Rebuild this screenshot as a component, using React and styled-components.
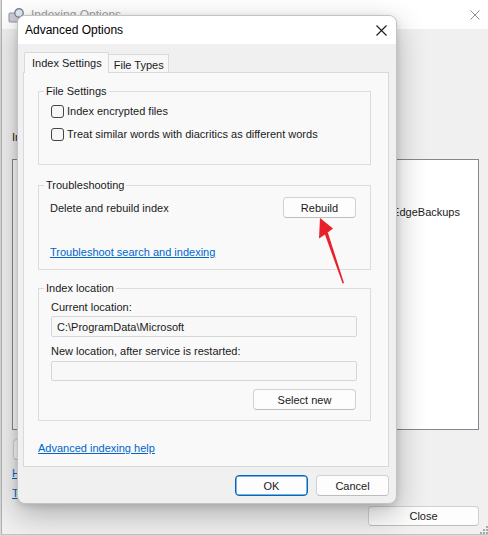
import React from "react";
import styled, { createGlobalStyle, css } from "styled-components";

const FONT = `"Liberation Sans", Arial, sans-serif`;

const GlobalStyle = createGlobalStyle`
  html, body {
    margin: 0;
    padding: 0;
  }
  body {
    font-family: ${FONT};
    background: #d9d9d9;
  }
  * {
    box-sizing: border-box;
  }
`;

const Screen = styled.div`
  position: relative;
  width: 488px;
  height: 536px;
  overflow: hidden;
  background: #d9d9d9;
  font-family: ${FONT};
  font-size: 11px;
  line-height: 14px;
  color: #1a1a1a;
`;

/* ---------- background window (Indexing Options) ---------- */

const MainWindow = styled.div`
  position: relative;
  display: flex;
  flex-direction: column;
  height: 535px;
  margin-left: 1px;
  border-left: 1px solid #b2b2b2;
  border-bottom: 1px solid #c4c4c4;
  background: #f0f0f0;
`;

const MainTitle = styled.div`
  display: flex;
  align-items: center;
  gap: 5px;
  height: 29px;
  padding: 0 8px 0 6px;
  background: #ffffff;
  color: #a0a0a0;
  font-size: 12px;
`;

const TitleText = styled.span`
  flex: 1;
`;

const MainBody = styled.div`
  display: flex;
  flex-direction: column;
  padding: 0 9px 0 10px;
`;

const StatusArea = styled.div`
  height: 101px;
`;

const Label = styled.div`
  white-space: nowrap;
`;

const LocationList = styled.div`
  margin-top: 15px;
  height: 271px;
  border: 1px solid #828790;
  background: #ffffff;
  overflow: hidden;
`;

const ListHeader = styled.div`
  display: flex;
  height: 26px;
  align-items: center;
  padding-left: 6px;
`;

const ListRow = styled.div`
  display: flex;
  height: 17px;
  align-items: center;
  padding-left: 6px;
  white-space: nowrap;
`;

const Cell = styled.span`
  width: ${(p) => p.$width || "auto"};
  flex: ${(p) => (p.$grow ? 1 : "none")};
  text-align: ${(p) => (p.$right ? "right" : "left")};
  padding-right: ${(p) => (p.$right ? "18px" : "0")};
  overflow: hidden;
`;

const BackButtons = styled.div`
  display: flex;
  gap: 8px;
  margin-top: 9px;
  padding-left: 1px;
`;

const BackLink = styled.a`
  display: block;
  margin-top: 6px;
  color: #0066cc;
  text-decoration: underline;
  white-space: nowrap;
`;

const BackFooter = styled.div`
  display: flex;
  justify-content: flex-end;
  margin-top: 6px;
`;

const Grip = styled.svg`
  position: absolute;
  right: 0;
  bottom: 0;
`;

/* ---------- shared controls ---------- */

const Button = styled.button`
  width: ${(p) => p.$width}px;
  height: ${(p) => p.$height || 21}px;
  padding: 0;
  border: 1px solid #d1d1d1;
  border-bottom-color: #bdbdbd;
  border-radius: 4px;
  background: #fdfdfd;
  font-family: ${FONT};
  font-size: 11px;
  color: #1a1a1a;
  ${(p) =>
    p.$primary &&
    css`
      border: 1px solid #0067c0;
      box-shadow: inset 0 0 0 0.5px #0067c0;
    `}
`;

const Link = styled.a`
  color: #0066cc;
  text-decoration: underline;
  cursor: pointer;
  align-self: flex-start;
  margin-top: ${(p) => p.$gap || 0}px;
`;

/* ---------- dialog ---------- */

const Dialog = styled.div`
  position: absolute;
  left: 17px;
  top: 15px;
  width: 380px;
  height: 489px;
  display: flex;
  flex-direction: column;
  border: 1px solid #c3c3c3;
  border-radius: 8px;
  background: #f0f0f0;
  box-shadow: 0 10px 30px rgba(0, 0, 0, 0.28), 0 2px 6px rgba(0, 0, 0, 0.12);
  overflow: hidden;
`;

const DialogTitle = styled.div`
  display: flex;
  align-items: center;
  justify-content: space-between;
  height: 29px;
  padding: 0 9px 0 7px;
  background: #ffffff;
  font-size: 12px;
  color: #000000;
`;

const DialogBody = styled.div`
  flex: 1;
  display: flex;
  flex-direction: column;
  padding: 8px 7px 7px 5px;
`;

const TabStrip = styled.div`
  position: relative;
  z-index: 1;
  display: flex;
  align-items: flex-end;
  height: 21px;
  margin-bottom: -1px;
  padding-left: 1px;
`;

const Tab = styled.div`
  display: flex;
  align-items: center;
  white-space: nowrap;
  border: 1px solid #d9d9d9;
  border-bottom: none;
  ${(p) =>
    p.$active
      ? css`
          height: 21px;
          padding: 0 6px 0 7px;
          background: #f9f9f9;
          border-radius: 2px 2px 0 0;
        `
      : css`
          height: 18px;
          margin-bottom: 1px;
          padding: 2px 4px 0 5px;
          border-left: none;
          background: #f7f7f7;
        `}
`;

const TabPanel = styled.div`
  flex: 1;
  display: flex;
  flex-direction: column;
  border: 1px solid #d9d9d9;
  background: #f9f9f9;
  padding: 11px 17px 11px 14px;
`;

const GroupBox = styled.fieldset`
  margin: ${(p) => p.$gap || 0}px 0 0 0;
  padding: 0;
  min-width: 0;
  border: 1px solid #dcdcdc;
`;

const Legend = styled.legend`
  margin-left: 5px;
  padding: 0 2px;
  line-height: 14px;
`;

const GroupInner = styled.div`
  display: flex;
  flex-direction: column;
  padding: ${(p) => p.$pad};
`;

const CheckRow = styled.label`
  display: flex;
  align-items: center;
  gap: 3px;
  height: 20px;
  & + & {
    margin-top: 3px;
  }
`;

const CheckBox = styled.span`
  width: 13px;
  height: 13px;
  border: 1px solid #454545;
  border-radius: 3px;
  background: #f7f7f7;
`;

const ActionRow = styled.div`
  display: flex;
  align-items: center;
  justify-content: space-between;
  padding-right: 1px;
`;

const FieldLabel = styled.div`
  margin-top: ${(p) => p.$gap || 0}px;
`;

const TextField = styled.div`
  margin-top: ${(p) => p.$gap || 0}px;
  height: ${(p) => p.$height || 21}px;
  display: flex;
  align-items: center;
  padding-left: 5px;
  border: 1px solid #d6d6d6;
  border-radius: 2px;
  background: #f8f8f8;
`;

const RightRow = styled.div`
  display: flex;
  justify-content: flex-end;
  margin-top: ${(p) => p.$gap || 0}px;
  padding-right: 1px;
`;

const DialogButtons = styled.div`
  display: flex;
  justify-content: flex-end;
  gap: 8px;
  margin-top: 8px;
`;

const Arrow = styled.svg`
  position: absolute;
  left: 310px;
  top: 210px;
  pointer-events: none;
`;

function CloseIcon({ size, color, width }) {
  return (
    <svg width={size} height={size} viewBox={`0 0 ${size} ${size}`}>
      <path
        d={`M0.5 0.5 L${size - 0.5} ${size - 0.5} M${size - 0.5} 0.5 L0.5 ${size - 0.5}`}
        stroke={color}
        strokeWidth={width}
        fill="none"
      />
    </svg>
  );
}

function IndexIcon() {
  return (
    <svg width="18" height="16" viewBox="0 0 18 16">
      <rect x="1" y="6" width="11" height="9" rx="1" fill="#c9cdd3" stroke="#8c939c" />
      <circle cx="11" cy="6" r="4.2" fill="#dfe8f2" stroke="#7a8594" strokeWidth="1.4" />
      <path d="M14 9 L17 12" stroke="#7a8594" strokeWidth="2" strokeLinecap="round" />
    </svg>
  );
}

function GripIcon() {
  const dots = [
    [6, 0],
    [3, 3],
    [6, 3],
    [0, 6],
    [3, 6],
    [6, 6],
  ];
  return (
    <Grip width="8" height="8" viewBox="0 0 8 8">
      {dots.map(([x, y]) => (
        <rect key={`${x}-${y}`} x={x} y={y} width="2" height="2" fill="#a8a8a8" />
      ))}
    </Grip>
  );
}

export default function App() {
  return (
    <>
      <GlobalStyle />
      <Screen>
        <MainWindow>
          <MainTitle>
            <IndexIcon />
            <TitleText>Indexing Options</TitleText>
            <CloseIcon size={10} color="#8f8f8f" width={1} />
          </MainTitle>
          <MainBody>
            <StatusArea />
            <Label>Index these locations:</Label>
            <LocationList>
              <ListHeader />
              <ListRow />
              <ListRow>
                <Cell $grow $right>
                  EdgeBackups
                </Cell>
              </ListRow>
            </LocationList>
            <BackButtons>
              <Button $width={72} aria-label="Modify" />
            </BackButtons>
            <BackLink>How does indexing affect searches?</BackLink>
            <BackLink>Troubleshoot search and indexing</BackLink>
            <BackFooter>
              <Button $width={111} $height={20}>
                Close
              </Button>
            </BackFooter>
          </MainBody>
          <GripIcon />
        </MainWindow>

        <Dialog>
          <DialogTitle>
            <span>Advanced Options</span>
            <CloseIcon size={11} color="#1a1a1a" width={1.1} />
          </DialogTitle>
          <DialogBody>
            <TabStrip>
              <Tab $active>Index Settings</Tab>
              <Tab>File Types</Tab>
            </TabStrip>
            <TabPanel>
              <GroupBox>
                <Legend>File Settings</Legend>
                <GroupInner $pad="3px 12px 20px 12px">
                  <CheckRow>
                    <CheckBox />
                    Index encrypted files
                  </CheckRow>
                  <CheckRow>
                    <CheckBox />
                    Treat similar words with diacritics as different words
                  </CheckRow>
                </GroupInner>
              </GroupBox>

              <GroupBox $gap={13}>
                <Legend>Troubleshooting</Legend>
                <GroupInner $pad="5px 13px 10px 11px">
                  <ActionRow>
                    <span>Delete and rebuild index</span>
                    <Button $width={73}>Rebuild</Button>
                  </ActionRow>
                  <Link $gap={27}>Troubleshoot search and indexing</Link>
                </GroupInner>
              </GroupBox>

              <GroupBox $gap={11}>
                <Legend>Index location</Legend>
                <GroupInner $pad="5px 13px 10px 12px">
                  <FieldLabel>Current location:</FieldLabel>
                  <TextField $gap={2}>C:\ProgramData\Microsoft</TextField>
                  <FieldLabel $gap={7}>New location, after service is restarted:</FieldLabel>
                  <TextField $gap={3} $height={20} />
                  <RightRow $gap={8}>
                    <Button $width={103}>Select new</Button>
                  </RightRow>
                </GroupInner>
              </GroupBox>

              <Link $gap={20}>Advanced indexing help</Link>
            </TabPanel>
            <DialogButtons>
              <Button $width={73} $primary>
                OK
              </Button>
              <Button $width={73}>Cancel</Button>
            </DialogButtons>
          </DialogBody>
        </Dialog>

        <Arrow width="40" height="80" viewBox="0 0 40 80">
          <path d="M10 8 L23 18.5 L16.5 23.5 L9 28.5 Z" fill="#e8202a" />
          <path d="M14.6 23.6 L17.8 22.4 L34 73 L32.6 73.6 Z" fill="#e8202a" />
        </Arrow>
      </Screen>
    </>
  );
}
